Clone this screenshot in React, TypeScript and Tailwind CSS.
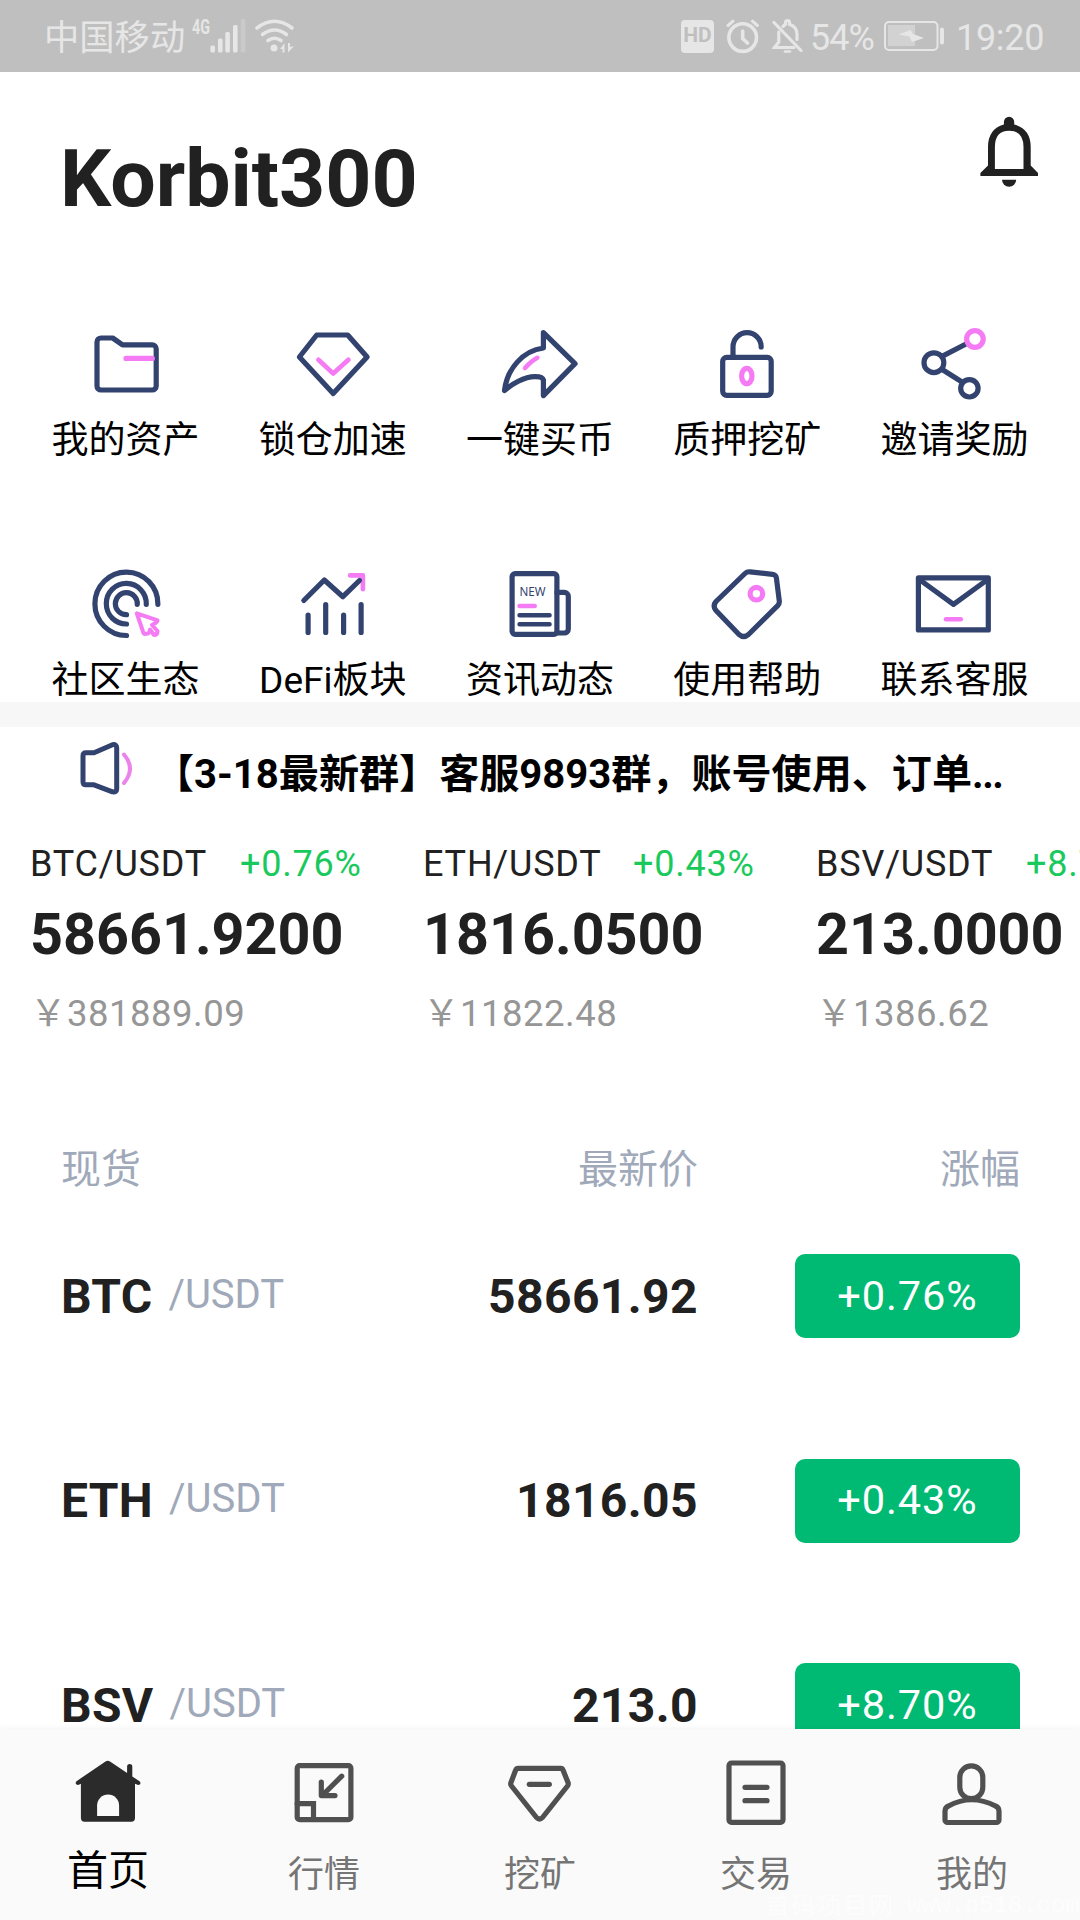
import { useState } from 'react';
import type { ReactNode } from 'react';
import clsx from 'clsx';

type IconProps = { children: ReactNode };

// 84px line icon used in the shortcut grid
function GridIcon({ children }: IconProps) {
  return (
    <svg
      viewBox="0 0 84 84"
      className="h-[84px] w-[84px] stroke-[#32436f]"
      fill="none"
      strokeWidth="5.2"
      strokeLinecap="round"
      strokeLinejoin="round"
    >
      {children}
    </svg>
  );
}

// 80px line icon used in the bottom tab bar
function TabIcon({ children }: IconProps) {
  return (
    <svg
      viewBox="0 0 80 80"
      className="h-20 w-20 stroke-[#505050]"
      fill="none"
      strokeWidth="5.2"
      strokeLinecap="round"
      strokeLinejoin="round"
    >
      {children}
    </svg>
  );
}

const shortcuts = [
  {
    name: '我的资产',
    icon: (
      <GridIcon>
        <path d="M17 15H28.7L38.5 21.8H68.2a4 4 0 0 1 4 4V63a4 4 0 0 1-4 4H17a4 4 0 0 1-4-4V19a4 4 0 0 1 4-4Z" />
        <path d="M42 35.4H68.3" className="stroke-[#f57bf5]" />
      </GridIcon>
    ),
  },
  {
    name: '锁仓加速',
    icon: (
      <GridIcon>
        <path d="M25.7 12H56.7L76.1 34L42.2 70.5L8.4 34Z" />
        <path d="M27.4 36.7L42.2 50.5L57.4 36.7" className="stroke-[#f57bf5]" strokeWidth="4.6" />
      </GridIcon>
    ),
  },
  {
    name: '一键买币',
    icon: (
      <GridIcon>
        <path d="M45.4 9.6L77 40.7L45.4 72.6V57Q44.5 53.6 37 53.6C26 53.6 13.5 61.5 6.5 67.5C9 46 25 27.5 45.4 25Z" />
        <path d="M27 45Q33.5 38 39.3 34.8" className="stroke-[#f57bf5]" strokeWidth="4.6" />
      </GridIcon>
    ),
  },
  {
    name: '质押挖矿',
    icon: (
      <GridIcon>
        <rect x="17.7" y="34.3" width="48.5" height="38" rx="4" />
        <path d="M28 34V24a14.1 14.3 0 0 1 28.2 0" />
        <ellipse cx="41.8" cy="53" rx="5.2" ry="7.7" className="stroke-[#f57bf5]" />
      </GridIcon>
    ),
  },
  {
    name: '邀请奖励',
    icon: (
      <GridIcon>
        <path d="M30 33.4L54 21M29.8 46.3L50 59" />
        <circle cx="21.9" cy="39.7" r="9.9" />
        <circle cx="57.4" cy="65.3" r="8.7" />
        <circle cx="62.9" cy="16" r="8.3" className="stroke-[#f57bf5]" />
      </GridIcon>
    ),
  },
  {
    name: '社区生态',
    icon: (
      <GridIcon>
        <path d="M73.9 41.3A31.5 31.7 0 1 0 42.5 72.5" />
        <path d="M62.3 41.3A20 20.3 0 1 0 42.5 61" />
        <path d="M53.3 41.3A11 11 0 1 0 42.5 51.7" />
        <path
          d="M52.8 50.3L73.5 57.3Q74 59 68 62L73.5 68Q73.5 72 70 72L66 66.5Q65 72 61.5 70.5Q59.5 72 58.5 67Z"
          className="stroke-[#f57bf5]"
          strokeWidth="4"
        />
      </GridIcon>
    ),
  },
  {
    name: 'DeFi板块',
    icon: (
      <GridIcon>
        <path d="M59.1 12.4H71.9V26.3" className="stroke-[#f57bf5]" strokeWidth="4.6" />
        <path d="M12.8 37.5L33.3 17L51.9 33.7L68.5 17.5" />
        <path d="M17.1 52V69.5M34.7 41.5V69.5M52.6 52V69.5M70.1 41.5V69.5" />
      </GridIcon>
    ),
  },
  {
    name: '资讯动态',
    icon: (
      <GridIcon>
        <rect x="14.1" y="10.7" width="44.8" height="60.6" rx="3" />
        <path d="M59 29.3H66.3a4 4 0 0 1 4 4V66a4 4 0 0 1-4 4H59" />
        <path d="M21.6 52.3H51.5M21.6 61.3H51.5" strokeWidth="4.6" />
        <path d="M21.6 43H36.7" className="stroke-[#f57bf5]" strokeWidth="4.6" />
        <text
          x="21.5"
          y="32.7"
          textLength="26"
          lengthAdjust="spacingAndGlyphs"
          stroke="none"
          className="fill-[#32436f] font-['Noto_Sans',sans-serif] text-[13px]"
        >
          NEW
        </text>
      </GridIcon>
    ),
  },
  {
    name: '使用帮助',
    icon: (
      <GridIcon>
        <path d="M45 8.8L67.5 11.3Q71 11.8 71.4 15L74.3 38Q74.6 40.7 72.7 42.6L43.5 71.5Q38.7 75.5 34 71.5L11 47.5Q7.3 43 11 38.5L40 10.5Q42 8.5 45 8.8Z" />
        <circle cx="51.4" cy="30.7" r="6.3" className="stroke-[#f57bf5]" />
      </GridIcon>
    ),
  },
  {
    name: '联系客服',
    icon: (
      <GridIcon>
        <rect x="6.4" y="14.9" width="69.9" height="52" />
        <path d="M8 17L41.5 41.3L75 17" />
        <path d="M34 56.2H48.8" className="stroke-[#f57bf5]" strokeWidth="4.6" />
      </GridIcon>
    ),
  },
];

const tickers = [
  { pair: 'BTC/USDT', change: '+0.76%', price: '58661.9200', cny: '381889.09' },
  { pair: 'ETH/USDT', change: '+0.43%', price: '1816.0500', cny: '11822.48' },
  { pair: 'BSV/USDT', change: '+8.70%', price: '213.0000', cny: '1386.62' },
];

const markets = [
  { coin: 'BTC', price: '58661.92', change: '+0.76%' },
  { coin: 'ETH', price: '1816.05', change: '+0.43%' },
  { coin: 'BSV', price: '213.0', change: '+8.70%' },
];

const tabs = [
  {
    name: '首页',
    icon: (
      <TabIcon>
        <path
          d="M37.5 11.5Q39.8 9.8 42 11.5L59.1 23V16.5a2.6 2.6 0 0 1 5.2 0V26.5L71.5 31.2Q73.3 33 71.8 34.6Q70 35.5 67 33.8V68a3.7 3.7 0 0 1-3.7 3.7H16.6a3.7 3.7 0 0 1-3.7-3.7V33.8Q10.5 35.5 8.5 34.6Q6.8 33 8.5 31.2Z"
          className="fill-[#2b2b2b]"
          stroke="none"
        />
        <path d="M29.1 66V55.5a11 11 0 0 1 22 0V66Z" className="fill-[#fafafa]" stroke="none" />
      </TabIcon>
    ),
  },
  {
    name: '行情',
    icon: (
      <TabIcon>
        <rect x="13.2" y="15.7" width="53.7" height="54" rx="2.5" />
        <path d="M13.2 53.7H29.5V69.5" strokeLinejoin="miter" />
        <path d="M57.7 26.2L38.7 45M37.3 32V45.6H51" />
      </TabIcon>
    ),
  },
  {
    name: '挖矿',
    icon: (
      <TabIcon>
        <path d="M18 18.3H61Q62.3 18.3 63 20L68.2 33Q68.5 34.5 67.5 36L42.5 67.5Q39.5 70.5 36.5 67.5L11.5 36Q10.3 34.5 10.8 33L15.7 20Q16.5 18.3 18 18.3Z" />
        <path d="M29.3 34.3H49.3" />
      </TabIcon>
    ),
  },
  {
    name: '交易',
    icon: (
      <TabIcon>
        <rect x="13" y="13" width="54" height="59.3" rx="2.5" />
        <path d="M29 37.3H51M29 50.7H51" />
      </TabIcon>
    ),
  },
  {
    name: '我的',
    icon: (
      <TabIcon>
        <rect x="27.8" y="15.9" width="23" height="32.8" rx="11.5" />
        <path d="M15.6 72.5a2.6 2.6 0 0 1-2.6-2.6V61Q13 57.5 16.5 56Q39.3 43.5 63.5 56Q67 57.5 67 61V69.9a2.6 2.6 0 0 1-2.6 2.6Z" />
      </TabIcon>
    ),
  },
];

function StatusBar() {
  return (
    <div className="flex h-[72px] shrink-0 items-center bg-[#bfbfbf] pr-[36px] pl-[44px] text-[36px] text-[#e6e6e6]">
      <span className="w-[141px] pt-[5px] text-[35.3px] whitespace-nowrap">中国移动</span>
      {/* network, signal and wifi */}
      <svg viewBox="0 0 110 40" className="ml-[6px] h-10 w-[110px] fill-[#e6e6e6]">
        <text x="1" y="18" textLength="18" lengthAdjust="spacingAndGlyphs" className="font-[Roboto,sans-serif] text-[21px] font-bold">
          4G
        </text>
        <rect x="19.4" y="29.5" width="4.6" height="7" rx="1.5" />
        <rect x="27" y="22.5" width="4.6" height="14" rx="1.5" />
        <rect x="34.3" y="16" width="4.6" height="20.5" rx="1.5" />
        <rect x="42" y="9" width="4.6" height="27.5" rx="1.5" />
        <rect x="49.8" y="3" width="4.6" height="33.5" rx="1.5" opacity="0.3" />
        <g fill="none" className="stroke-[#e6e6e6]" strokeWidth="3.6" strokeLinecap="round">
          <path d="M66 12Q83.5 -1.5 101 12" />
          <path d="M71.5 18.5Q83.5 9.5 95.5 18.5" />
          <path d="M77 24.5Q83.5 20 90 24.5" />
        </g>
        <circle cx="83" cy="32" r="3.5" />
        <path d="M89 33L93.5 27V36.5H91.5V33ZM97 27V36.5L99.5 34L103 30L99 31V27Z" />
      </svg>

      <div className="ml-auto flex items-center">
        <span className="flex h-[33px] w-[33px] items-center justify-center rounded-[4px] bg-[#e6e6e6] text-[21px] font-bold text-[#bfbfbf]">
          HD
        </span>
        <svg viewBox="0 0 34 36" className="ml-[12px] h-9 w-[34px] stroke-[#e6e6e6]" fill="none" strokeWidth="3.6" strokeLinecap="round">
          <circle cx="16.7" cy="19.6" r="13.8" />
          <path d="M16.7 13V20.5L21.5 25" />
          <path d="M2 7.5L7 3.2M31.4 7.5L26.4 3.2" strokeWidth="3" />
        </svg>
        <svg viewBox="0 0 32 36" className="ml-[12px] h-9 w-8 stroke-[#e6e6e6]" fill="none" strokeWidth="3.2" strokeLinecap="round">
          <path d="M2 4.5L29 32.5" />
          <path d="M6.8 14V24L2.5 29.5H22" />
          <path d="M11 8.5Q12 7 13.5 6.3V4.5a2 2 0 0 1 4 0V6.3Q25 9 25 16V21.5" />
          <path d="M13 33.5H18" strokeWidth="2.6" />
        </svg>
        <span className="ml-[6px] w-[66px] pt-[3px] tracking-[-1px]">54%</span>
        <svg viewBox="0 0 62 30" className="ml-[8px] h-[30px] w-[62px]">
          <rect x="1" y="1" width="52.5" height="28" rx="4" fill="none" className="stroke-[#e6e6e6]" strokeWidth="2" />
          <rect x="4" y="4" width="27" height="21" className="fill-[#d2d2d2]" />
          <path d="M14.5 13.5L26.5 9L29 13L40 17L28 21L25.5 15.5Z" className="fill-[#e6e6e6]" />
          <rect x="56" y="6.5" width="4" height="17" rx="2" className="fill-[#e6e6e6]" />
        </svg>
        <span className="ml-[10px] w-[88px] pt-[3px] tracking-[-0.3px]">19:20</span>
      </div>
    </div>
  );
}

function Header() {
  return (
    <header className="flex h-[248px] shrink-0 items-start justify-between pr-[40px] pl-[60px]">
      <h1 className="mt-[59px] text-[80.6px] leading-[96px] font-bold text-[#212121]">Korbit300</h1>
      <svg viewBox="0 0 60 72" className="mt-[44px] h-[72px] w-[60px] fill-[#212121]">
        <path
          fillRule="evenodd"
          d="M23.9 8.5V6a5.15 5.3 0 0 1 10.3 0V8.5Q50.7 13 50.7 31V49.5L58 57V60H.4V57L8 49.5V31Q8 13 23.9 8.5ZM14.9 53H43.5V31Q43.5 14.7 29.2 14.7Q14.9 14.7 14.9 31Z"
        />
        <path d="M22 63.7H36.2a7.1 7.1 0 0 1-14.2 0Z" />
      </svg>
    </header>
  );
}

function App() {
  const [activeTab, setActiveTab] = useState('首页');

  return (
    <div className="flex h-[1920px] w-[1080px] flex-col overflow-hidden bg-white font-[Roboto,'Noto_Sans_CJK_SC',sans-serif]">
      <StatusBar />

      <main className="flex min-h-0 flex-1 flex-col overflow-hidden">
        <Header />

        {/* Shortcuts */}
        <div className="grid h-[382px] shrink-0 grid-cols-5 content-start px-[22px]">
          {shortcuts.map((item) => (
            <div key={item.name} className="flex h-[240px] flex-col items-center pt-[3px]">
              {item.icon}
              <span className="mt-[12px] text-[37px] leading-[44px] text-black">{item.name}</span>
            </div>
          ))}
        </div>

        <div className="h-[25px] shrink-0 bg-[#f7f7f7]" />

        {/* Notice */}
        <div className="flex h-[89px] shrink-0 items-center pl-[76px]">
          <svg
            viewBox="0 0 60 60"
            className="h-[60px] w-[60px] shrink-0 stroke-[#32436f]"
            fill="none"
            strokeWidth="5"
            strokeLinecap="round"
            strokeLinejoin="round"
          >
            <path d="M10 10.8H18L36.5 2.7Q40.7 2 40.7 6V47Q40.7 50.5 36.5 49.8L18 42.8H10Q7 42.8 7 39.8V13.8Q7 10.8 10 10.8Z" />
            <path d="M48 12.5Q60 26.5 48 41" className="stroke-[#ec82ec]" strokeWidth="4" />
          </svg>
          <span className="ml-[18px] pt-[6px] text-[40.1px] leading-[60px] font-bold whitespace-nowrap text-black">
            【3-18最新群】客服9893群，账号使用、订单<span className="tracking-[-1.5px]">...</span>
          </span>
        </div>

        {/* Tickers */}
        <div className="flex h-[322px] shrink-0 overflow-hidden pl-[30px]">
          {tickers.map((item) => (
            <div key={item.pair} className="w-[393px] shrink-0 pt-[26px]">
              <div className="flex gap-[32px] text-[36px] leading-[44px]">
                <span className="w-[178px] tracking-[0.8px] text-[#212121]">{item.pair}</span>
                <span className="tracking-[0.8px] text-[#19c95c]">{item.change}</span>
              </div>
              <div className="mt-[15px] text-[57.5px] leading-[68px] font-bold text-[#212121]">{item.price}</div>
              <div className="mt-[23px] text-[36.5px] leading-[44px] tracking-[0.5px] text-[#969696]">￥{item.cny}</div>
            </div>
          ))}
        </div>

        {/* Market list */}
        <div className="grid shrink-0 grid-cols-[300px_337px_1fr] pt-[2px] pr-[60px] pl-[61px] text-[40px] leading-[60px] text-[#9fa9b9]">
          <span>现货</span>
          <span className="text-right">最新价</span>
          <span className="text-right">涨幅</span>
        </div>
        {markets.map((item, i) => (
          <div
            key={item.coin}
            className={clsx(
              'grid h-[84px] shrink-0 grid-cols-[300px_337px_1fr] items-center pr-[60px] pl-[61px]',
              i === 0 ? 'mt-[54px]' : 'mt-[120.5px]'
            )}
          >
            <div className="flex items-center gap-[16px] pt-[1px]">
              <span className="text-[48px] font-bold tracking-[0.3px] text-[#212121]">{item.coin}</span>
              <span className="mb-[4px] text-[40px] text-[#9fa9b9]">/USDT</span>
            </div>
            <span className="pt-[1px] text-right text-[48px] font-bold tracking-[0.4px] text-[#212121]">{item.price}</span>
            <span className="flex h-[84px] w-[225px] items-center justify-center justify-self-end rounded-[10px] bg-[#00ba74] text-[41.5px] tracking-[0.9px] text-white">
              {item.change}
            </span>
          </div>
        ))}
      </main>

      {/* Bottom tabs */}
      <nav className="relative flex h-[191px] shrink-0 bg-[#fafafa] shadow-[0_-1px_5px_rgba(0,0,0,0.05)]">
        {tabs.map((tab) => (
          <button key={tab.name} className="flex flex-1 flex-col items-center pt-[21px]" onClick={() => setActiveTab(tab.name)}>
            {tab.icon}
            <span
              className={clsx(
                activeTab === tab.name
                  ? 'mt-[16px] text-[41px] leading-[50px] text-black'
                  : 'mt-[23px] text-[36px] leading-[44px] text-[#757575]'
              )}
            >
              {tab.name}
            </span>
          </button>
        ))}
        <span className="absolute right-0 bottom-0 flex gap-[12px] text-[24px] leading-[28px] whitespace-nowrap text-[#fdfdfd]">
          <span className="tracking-[2px]">首码项目网</span>
          <span className="font-['Liberation_Mono',monospace]">www.p518.com</span>
        </span>
      </nav>
    </div>
  );
}

export default App;
